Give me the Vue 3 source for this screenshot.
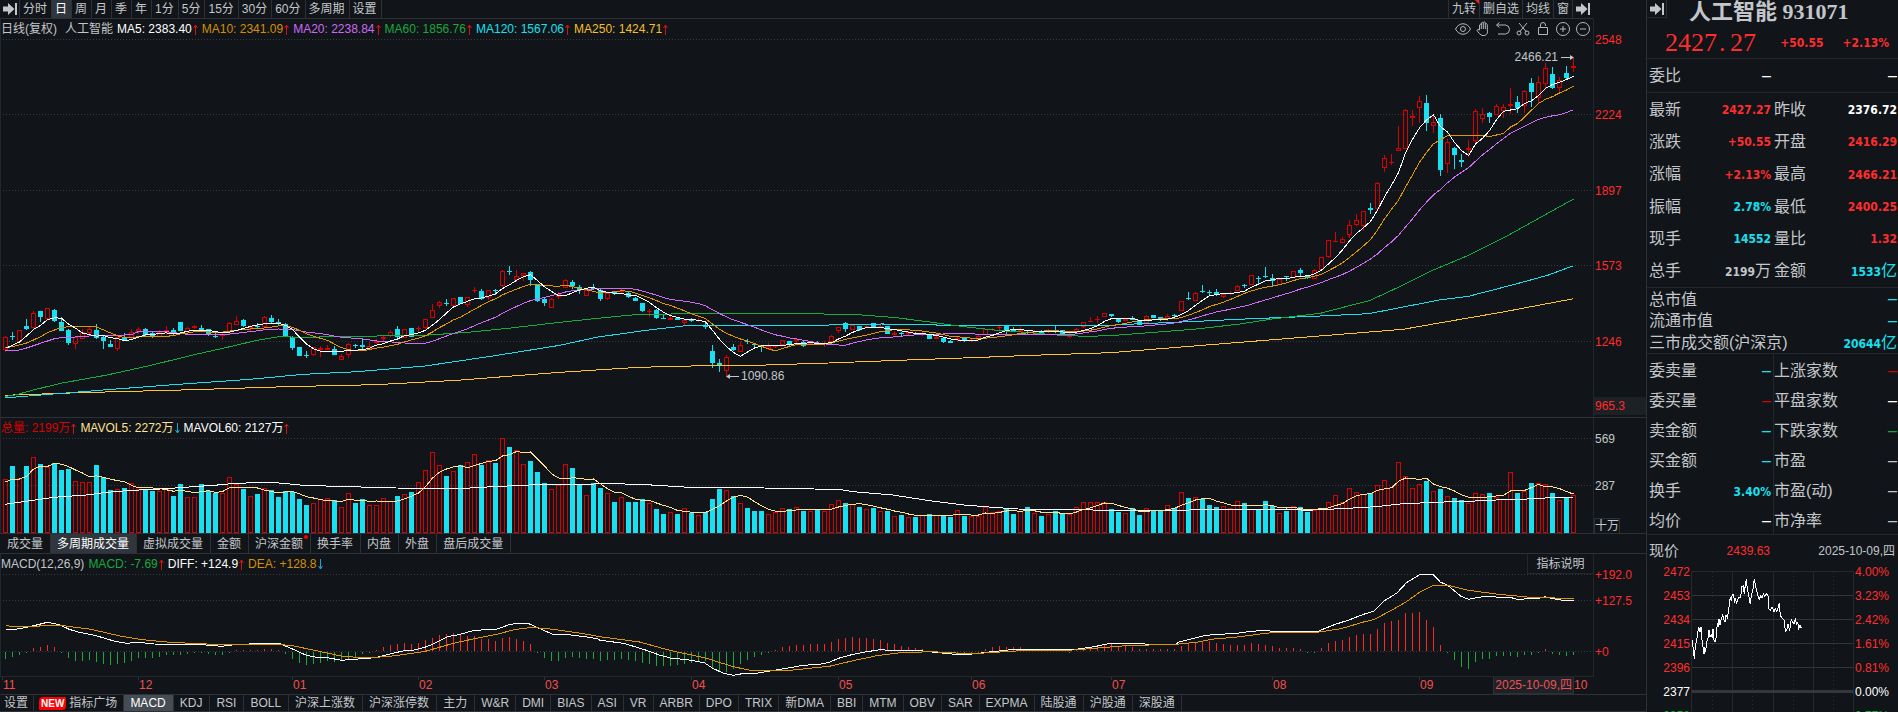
<script setup>
const CYAN = 'c'
const STEP = 7
const FIRST_X = 5.5
const PLOT_LEFT = 1
const PLOT_WIDTH = 1592

/* ---------- candles: direction + high, body top, body bottom, low ---------- */
const candleSegments = [
  {
    base: 240,
    rows: `r289,291,330,335 c276,288,291,300 r270,270,306,306 c237,257,268,270 r213,219,264,264 c213,213,232,245
    r204,204,237,237 c207,210,243,245 c232,246,273,273 c267,270,309,315 r290,290,312,327 r267,276,297,297
    r262,267,279,285 c252,270,294,297 c288,291,303,327 c300,312,321,321 r290,292,327,333 c279,293,300,303
    r268,276,293,296 r261,267,275,282 c264,267,285,290 c275,279,290,294 r270,276,290,290 r258,270,279,284
    c264,270,282,285 c246,246,273,273 r262,265,276,282 r255,258,264,268 c255,264,272,275 c267,267,284,288
    c280,288,291,294 r280,282,288,300 r246,249,276,282 r228,243,255,255 c237,240,258,261 r254,258,264,275
    c249,258,261,264 r228,231,260,264 c225,234,246,249 c238,246,252,256 c249,252,288,288 c288,292,324,330
    c321,321,348,348 c333,345,348,354 r321,321,345,348 r318,324,330,351 r315,324,330,330 c318,327,345,345
    r342,348,360,360 r309,312,345,354 c312,315,318,324 c297,315,321,330 r306,318,328,330 r297,304,309,312
    r285,291,297,303 r270,276,288,290 c258,267,291,294 r267,267,293,293 c264,264,291,291 r258,264,267,276
    r237,237,264,267 r192,210,234,234 r183,186,198,204 c177,189,192,198 r174,174,198,198 c171,171,192,192
    r171,171,195,201 r141,150,153,159 c147,153,177,180 r150,150,174,180 c147,150,153,165 r90,93,138,141
    c78,93,96,105 r90,108,120,125 r99,99,108,123 c93,96,120,138 c132,135,183,186 c174,177,189,198
    r174,177,204,204 r156,162,170,178 r118,120,143,145 c120,126,138,147 c135,142,150,162 r145,150,167,167
    c132,144,147,150 c148,150,177,183 r157,160,177,180 c153,157,162,165 r147,153,156,162 c155,160,171,174
    c171,174,183,183 c189,189,213,216 r207,213,216,231 c207,210,234,237 c222,234,237,237 r228,234,240,240
    c231,234,240,240 r238,241,249,258 c234,238,244,246 r234,240,243,246 c246,255,261,267 c315,333,369,384
    c357,369,375,396 r345,351,392,408 c312,321,330,333 r306,316,335,335 c297,304,307,312 c309,312,315,327
    c315,317,322,336 r309,318,328,330 r315,318,321,324 r300,300,315,318 c303,303,312,318 r294,297,303,310
    c303,306,318,321 r305,308,311,313 c303,308,311,314 r304,309,312,321 r285,289,306,306 r261,261,274,279
    c246,249,267,276 r256,256,270,270 c258,258,270,273 r256,258,261,264 c249,249,262,264 r249,257,260,264
    c258,258,282,282 r273,279,285,285 c276,279,282,288 r273,276,282,288 c276,280,283,285 r276,280,283,287
    c282,282,297,297 r288,291,297,297 c291,294,306,309 c300,303,308,309 r288,294,300,303 c292,294,303,306
    r294,300,303,306 r286,289,300,300 r267,267,284,286 r264,267,270,273 r255,262,264,270 c255,258,270,285
    c261,270,274,276 r261,270,276,276 c270,276,280,285 r270,273,280,282 c270,273,279,285 r267,270,276,278
    c256,270,273,278 c270,270,283,285 r280,284,290,294 r264,267,277,278 r246,247,262,264 r231,243,246,246
    r228,237,240,250 r219,220,231,231`
  },
  {
    base: 60,
    rows: `c762,762,768,771 c777,777,786,789 r777,777,782,782 c768,777,780,780 c780,780,795,795 r765,768,789,792
    c765,765,774,774 c771,771,780,783 r762,768,777,783 c762,766,769,771 r723,723,753,753 c696,714,717,720
    r696,699,723,723 c675,693,696,699 c690,696,699,705 c687,696,705,708 r699,702,711,714 r693,699,702,705
    r675,678,693,693 c672,675,678,684 r645,645,675,676 c648,654,657,672 c621,648,651,654 c642,654,663,678
    r656,658,675,676 c648,648,651,663 r633,633,654,654 c624,630,639,648 c645,645,654,657 r627,630,657,657
    r591,591,630,630 r541,541,591,593 r516,543,546,546 r531,537,549,549 r480,495,525,533 r462,480,495,497
    r453,453,497,513 c429,444,450,461 r366,369,447,447 r285,294,324,335 r282,306,309,315 r198,264,273,273
    r147,150,267,267 r150,168,174,197 r108,123,144,189 c105,129,189,213 r162,186,198,218 c162,174,330,348
    r237,246,312,338 c261,264,285,327 c282,299,305,320 r240,264,269,290 r147,153,243,252 r144,162,177,189
    c156,159,171,189 r132,138,165,165 r132,141,152,173 r84,132,137,161 c108,126,144,158 r90,93,137,158
    c54,69,96,141 r48,66,114,129 r9,24,72,83 c21,42,84,87 r51,60,84,96 c18,39,54,57 r-6,18,24,36`
  }
]

const candles = candleSegments
  .flatMap(({ base, rows }) =>
    rows.trim().split(/\s+/).map(row => {
      const [high, top, bottom, low] = row.slice(1).split(',').map(v => Math.round(v / 3) + base)
      return { kind: row[0], high, top, bottom, low }
    })
  )
  .map((c, i) => ({ ...c, x: FIRST_X + STEP * i, close: c.kind === CYAN ? c.bottom : c.top }))

let risingPath = ''
let fallingWicks = ''
let fallingBodies = ''
for (const { kind, x, high, top, bottom, low } of candles) {
  const wicks = (high < top ? `M${x} ${high}V${top}` : '') + (low > bottom ? `M${x} ${bottom}V${low}` : '')
  if (kind === CYAN) {
    fallingWicks += wicks
    fallingBodies += `M${x - 2.5} ${top}h5V${Math.max(bottom, top + 1)}h-5z`
  } else {
    const depth = bottom - top
    risingPath += wicks + (depth <= 1
      ? `M${x - 2.5} ${top + 0.5}h5`
      : `M${x - 2} ${top + 0.5}h4V${bottom - 0.5}h-4z`)
  }
}

/* ---------- line helpers ---------- */
const trace = (parts) => parts
  .flatMap(([scale, left, top, pts]) => pts.split(' ').map(p => {
    const [x, y] = p.split(',').map(Number)
    return `${(x / scale + left).toFixed(1)},${(y / 3 + top).toFixed(1)}`
  }))
  .join(' ')

/* `lead` holds the first values, for which there is no full span of history */
const average = (values, span, lead) => values
  .map((_, i) => {
    const y = i < lead.length
      ? lead[i] / 3 + 240
      : values.slice(Math.max(0, i - span + 1), i + 1).reduce((a, b) => a + b, 0) / Math.min(span, i + 1)
    return `${FIRST_X + STEP * i},${y.toFixed(1)}`
  })
  .join(' ')

const closes = candles.map(c => c.close + (c.kind === CYAN ? 0 : 0.5))
const A = 2.8
const B = 2.9037
const C = 2.529

const priceLines = [
  { name: 'ma250', points: trace([
    [A, 0, 240, '14,466 220,458 540,449 800,440 1050,434 1280,421 1568,397'],
    [A, 550, 240, '250,382 430,377 580,376 780,369 1000,360 1210,352 1350,346 1568,338'],
    [B, 1100, 60, '880,808 990,788 1170,756 1375,716']]) },
  { name: 'ma120', points: trace([
    [A, 0, 240, '14,473 45,471 150,462 300,449 500,433 700,418 850,403 1000,395 1190,378 1380,348 1568,316'],
    [A, 550, 240, '130,292 260,272 390,256 780,255 930,252 1040,253 1100,256 1568,256'],
    [B, 1100, 60, '100,792 260,785 440,776 620,769 780,761 870,743 990,719 1070,709 1200,674 1300,646 1375,617']]) },
  { name: 'ma60', points: trace([
    [A, 0, 240, '14,469 40,466 90,451 170,430 300,405 430,374 540,345 640,321 720,301 780,290 850,292 1000,289 1190,286 1310,277 1430,264 1568,247'],
    [A, 550, 240, '150,233 250,223 430,221 680,221 850,223 970,233 1063,246 1150,259 1250,271 1330,277 1430,286 1500,289 1568,287'],
    [B, 1100, 60, '270,808 400,793 500,777 640,760 785,721 870,680 968,630 1070,586 1180,529 1375,417']]) },
  { name: 'ma20', points: average(closes, 20, [332, 331, 330, 324, 317, 310, 303, 296, 293, 293, 291, 289, 288, 287, 286, 286, 285, 285, 284]) },
  { name: 'ma10', points: average(closes, 10, [323, 320, 315, 309, 300, 290, 278, 270, 262]) },
  { name: 'ma5', points: average(closes, 5, [325, 316, 306, 288]) }
]

/* ---------- volume ---------- */
const volumeSegments = [
  [410, `208 168 205 168 142 162 170 160 180 177 214 217 217 165 202 240 238 234 220 236 237 243 244 237 258 222 262 262 222 244
  249 250 202 222 237 259 252 235 240 262 243 247 267 285 280 268 265 270 292 250 279 267 286 286 265 274 258 253 246 217
  181 127 166 198 184 165 157 133 165 151 159 85 111 121 163 153 186 219 238 226`],
  [420, `132 144 195 225 190 204 219 246 231 246 246 237 249 267 282 276 282 264 279 285 276 237 207 210 228 249 264 273 273 282
  275 264 267 261 273 273 267 273 252 240 249 252 261 267 264 273 273 288 285 291 291 285 282 286 288 291 270 287 288 288
  261 276 273 267 282 273 261 279 288 282 273 281 283 261 246 246 246 246 268 276 279 264 285 265 270 272 256 264 216 234
  231 238 255 261 258 264 243 249 268 268 243 259 279 273 258 261 276 271 268 247 226 247 205 217 222 219 196 181 201 127
  169 205 193 183 214 207 229 234 240 249 219 223 219 231 237 157 219 214 189 190 193 219 241 234 226`]
]
const volumes = volumeSegments.flatMap(([base, list]) => list.trim().split(/\s+/).map(v => Math.round(v / 3) + base))
let risingBars = ''
let fallingBars = ''
volumes.forEach((top, i) => {
  const x = FIRST_X + STEP * i
  if (candles[i].kind === CYAN) fallingBars += `M${x - 2.5} ${top}h5V533h-5z`
  else risingBars += `M${x - 2} ${top + 0.5}h4V532.5h-4z`
})
const volumeFast = average(volumes, 5, [726, 717, 717, 709])
const volumeSlow = trace([
  [A, 0, 410, '14,283 74,274 150,262 240,255 300,247 370,241 450,237 540,230 600,226 660,220 760,217 850,226 940,229 1110,234 1200,235 1300,235 1400,229 1500,224'],
  [A, 550, 420, '0,193 110,193 150,190 270,194 390,202 600,204 740,207 815,209 850,215 960,225 1063,242 1160,255 1240,262 1310,267 1400,269 1520,270'],
  [B, 1100, 420, '110,271 240,271 300,268 550,268 600,271 700,266 800,260 870,252 970,247 1070,244 1150,240 1240,237 1310,233 1375,232']])

/* ---------- MACD ---------- */
const macdSegments = [
  [590, `206 201 195 189 174 171 165 171 189 204 212 213 210 216 222 225 222 219 213 204 204 204 201 195 195 195 192 187 189 192
  195 195 189 180 180 180 180 177 177 180 192 207 219 225 222 219 213 216 213 207 201 192 189 180 171 165 162 159 162 159
  150 144 135 132 129 132 138 138 147 147 153 144 141 147 153 162 189 204 213 213 204 201 204 207 207 213 210 210 207 210
  213 219 222 228 228 228 225 222 219 213 213 234 243 246 237 222 210 201 195 189 180 171 168 165 165 162 162 162 156 147
  144 141 144 144 147 150 159 162 168 171 174 177 183 187 189 189 189 189 189 187 177 171 168 171 171 171 177 180 180 180
  180 180 187 180 177 174 171 165 162 171 165 171 177 177 177 177 177 177 168 162 159 153 153`],
  [420, `669 672 675 675 675 669 672 675 678 684 684 684 687 697 697 684 669 663 660 651 645 642 642 627 609 603 600 579 579 576
  600 621 675 697 720 741 747 726 717 717 708 708 708 711 705 705 699 687 702 705 708 705`]
]
let macdUp = ''
let macdDown = ''
macdSegments
  .flatMap(([base, list]) => list.trim().split(/\s+/).map(v => Math.round(v / 3) + base))
  .forEach((end, i) => {
    const x = FIRST_X + STEP * i
    if (end < 651) macdUp += `M${x} 651V${end}`
    else if (end > 651) macdDown += `M${x} 652V${Math.max(end, 653)}`
  })

const diffLine = trace([
  [C, 0, 590, '14,118 40,118 75,110 120,97 150,104 175,118 200,127 240,136 290,154 320,160 350,157 390,162 450,163 500,163 560,169 600,163 660,161 705,160 730,172 775,196 800,202 828,203 864,211 905,207 950,203 1000,188 1023,182 1045,181 1076,171 1094,163 1135,139 1160,134 1200,121 1255,118 1288,104 1310,99 1335,100 1360,113 1400,134 1430,133 1480,140 1510,146'],
  [C, 600, 590, '0,151 60,160 115,180 150,195 178,204 225,210 264,218 284,234 312,250 337,256 360,251 400,249 450,239 515,226 560,222 580,217 603,205 640,193 675,185 709,179 730,181 800,181 840,186 890,192 940,192 985,186 1040,179 1180,178 1210,177 1250,170 1290,160 1350,160 1390,163 1455,163'],
  [B, 1100, 420, '230,666 257,659 300,648 335,643 390,641 440,634 480,631 500,634 630,635 680,614 725,599 765,583 795,574 826,542 862,519 890,488 928,464 968,464 988,486 1010,496 1048,529 1070,538 1110,530 1190,532 1212,538 1275,535 1293,530 1310,535 1345,541 1375,541']])
const deaLine = trace([
  [C, 0, 590, '14,107 30,109 100,108 160,107 230,118 300,137 360,149 430,157 540,163 700,163 740,167 800,182 870,200 940,203 1000,197 1076,184 1147,160 1200,146 1260,132 1300,119 1345,112 1400,118 1480,132'],
  [C, 600, 590, '0,140 100,156 180,182 264,203 337,230 380,241 480,241 580,229 640,212 700,197 760,188 840,185 900,189 970,189 1080,181 1200,180 1260,174 1330,167 1450,163'],
  [B, 1100, 420, '220,673 280,667 330,657 390,652 440,646 480,640 520,637 630,637 700,626 765,606 795,599 846,571 887,547 928,517 965,497 1010,496 1070,511 1150,522 1240,531 1375,536']])

/* ---------- intraday ---------- */
const intraday = trace([[3, 1500, 460, '577,540 583,596 586,560 590,540 596,500 600,515 603,502 606,540 612,583 614,565 617,572 620,545 623,540 627,511 630,530 634,524 638,535 639,508 642,540 645,547 648,535 652,490 655,500 657,478 660,494 664,476 668,466 672,480 675,486 678,466 682,472 686,450 691,412 694,422 697,402 700,402 704,428 707,415 709,432 713,418 718,412 722,412 725,380 730,378 733,402 736,375 739,358 742,385 745,400 751,432 755,400 758,395 763,358 768,385 774,408 778,418 782,408 786,414 790,402 794,410 800,400 806,412 806,445 811,452 816,440 822,455 826,446 830,454 834,445 838,430 841,465 846,475 852,480 854,500 857,514 861,508 864,492 869,512 874,478 878,486 882,492 886,478 890,492 893,488 896,505 900,494 903,505 905,502']])
const leftScale = ['2472', '2453', '2434', '2415', '2396', '2377', '2358']
const rightScale = ['4.00%', '3.23%', '2.42%', '1.61%', '0.81%', '0.00%', '0.77%']
const scaleTone = i => (i < 5 ? 'red' : i === 5 ? 'white' : 'green')

/* ---------- text content ---------- */
const periods = ['分时', '日', '周', '月', '季', '年', '1分', '5分', '15分', '30分', '60分', '多周期', '设置']
const tools = ['九转', '删自选', '均线', '窗']
const averages = [
  ['ma5', 'MA5: 2383.40'], ['ma10', 'MA10: 2341.09'], ['ma20', 'MA20: 2238.84'],
  ['ma60', 'MA60: 1856.76'], ['ma120', 'MA120: 1567.06'], ['ma250', 'MA250: 1424.71']
]
const volumeTabs = ['成交量', '多周期成交量', '虚拟成交量', '金额', '沪深金额', '换手率', '内盘', '外盘', '盘后成交量']
const indicatorTabs = ['MACD', 'KDJ', 'RSI', 'BOLL', '沪深上涨数', '沪深涨停数', '主力', 'W&R', 'DMI', 'BIAS', 'ASI', 'VR', 'ARBR', 'DPO', 'TRIX', '新DMA', 'BBI', 'MTM', 'OBV', 'SAR', 'EXPMA', '陆股通', '沪股通', '深股通']
const months = [['11', 2], ['12', 138], ['01', 292], ['02', 418], ['03', 544], ['04', 691], ['05', 838], ['06', 971], ['07', 1111], ['08', 1272], ['09', 1419], ['10', 1573]]
const priceTicks = [['2548', 40], ['2224', 115], ['1897', 191], ['1573', 266], ['1246', 342]]
const quotes = [
  ['最新', '2427.27', 'red', '昨收', '2376.72', 'white'],
  ['涨跌', '+50.55', 'red', '开盘', '2416.29', 'red'],
  ['涨幅', '+2.13%', 'red', '最高', '2466.21', 'red'],
  ['振幅', '2.78%', 'cyan', '最低', '2400.25', 'red'],
  ['现手', '14552', 'cyan', '量比', '1.32', 'red'],
  ['总手', '2199万', 'grey', '金额', '1533亿', 'cyan']
]
const totals = [['总市值', '–'], ['流通市值', '–'], ['三市成交额(沪深京)', '20644亿']]
const breadth = [
  ['委卖量', '–', 'cyan', '上涨家数', '–', 'deep'],
  ['委买量', '–', 'deep', '平盘家数', '–', 'white'],
  ['卖金额', '–', 'cyan', '下跌家数', '–', 'green'],
  ['买金额', '–', 'cyan', '市盈', '–', 'grey'],
  ['换手', '3.40%', 'cyan', '市盈(动)', '–', 'grey'],
  ['均价', '–', 'white', '市净率', '–', 'grey']
]
/* splits a value into its bold figure and its lighter unit or dash */
const parts = text => text.match(/^([^万亿–]*)([万亿–]?)$/).slice(1)
const across = x => ({ left: `${((x - PLOT_LEFT) / PLOT_WIDTH) * 100}%` })
</script>

<template>
  <div class="terminal">
    <main class="charts">
      <nav class="toolbar" aria-label="周期">
        <button class="jump" type="button" aria-label="展开">
          <svg width="14" height="14" viewBox="0 0 14 14"><path d="M0 4.500h5V1l6.500 6L5 13V9.500H0z" /><path d="M12 1h2v12h-2z" /></svg>
        </button>
        <button v-for="p in periods" :key="p" type="button" class="period" :class="{ active: p === '日' }">{{ p }}</button>
        <span class="spacer"></span>
        <button v-for="t in tools" :key="t" type="button" class="tool" :class="{ flagged: t === '九转' }">{{ t }}</button>
        <button class="jump right" type="button" aria-label="收起">
          <svg width="14" height="14" viewBox="0 0 14 14"><path d="M0 4.500h5V1l6.500 6L5 13V9.500H0z" /><path d="M12 1h2v12h-2z" /></svg>
        </button>
      </nav>

      <section class="panel price">
        <div class="plot">
          <header class="legend">
            <span>日线(复权)</span><span class="stock">人工智能</span>
            <span v-for="[tone, text] in averages" :key="tone" class="reading" :class="tone">{{ text }}<svg class="arrow" width="5" height="11" viewBox="0 0 5 11"><path d="M2.5 11V1M.5 4l2-3 2 3" /></svg></span>
            <span class="icons">
              <button type="button" aria-label="显示"><svg width="16" height="16" viewBox="0 0 16 16"><path d="M.5 8C4 1 12 1 15.500 8 12 15 4 15 .5 8z" /><circle cx="8" cy="8" r="2.500" /></svg></button>
              <button type="button" aria-label="拖动"><svg width="16" height="16" viewBox="0 0 16 16"><path d="M4.500 9V4q.8-1.500 1.800 0V2q1-1.500 2 0v-.5q1-1.300 2 0V3q1-1 2 .5V9q1 4-2.500 5.500H7Q4 13 2 9.500q0-1.700 2.500-.5M6.300 3.500V8M8.300 2v6M10.300 3v5" /></svg></button>
              <button type="button" aria-label="撤销"><svg width="16" height="16" viewBox="0 0 16 16"><path d="M2 4h8.500q4 .5 4 4.500t-4 4.500H3M4.500 1.500 1.500 4l3 2.500" /></svg></button>
              <button type="button" aria-label="剪切"><svg width="16" height="16" viewBox="0 0 16 16"><path d="M4 2l7.500 9M12 2 4.500 11" /><circle cx="4" cy="12" r="2" /><circle cx="12" cy="12" r="2" /></svg></button>
              <button type="button" aria-label="锁定"><svg width="16" height="16" viewBox="0 0 16 16"><path d="M3.500 6.500h9v7h-9zM5.500 6.500V4q0-2.500 2.500-2.500T10.500 4v1" /></svg></button>
              <button type="button" aria-label="放大"><svg width="16" height="16" viewBox="0 0 16 16"><circle cx="8" cy="8" r="6.500" /><path d="M5 8h6M8 5v6" /></svg></button>
              <button type="button" aria-label="缩小"><svg width="16" height="16" viewBox="0 0 16 16"><circle cx="8" cy="8" r="6.500" /><path d="M5 8h6" /></svg></button>
            </span>
          </header>
          <div class="canvas">
            <svg class="chart" viewBox="1 39 1592 378" preserveAspectRatio="none">
              <path class="grid" d="M3 39.500H1592M3 114.500H1592M3 190.500H1592M3 265.500H1592M3 341.500H1592" />
              <path class="rise" :d="risingPath" />
              <path class="fall-line" :d="fallingWicks" />
              <path class="fall" :d="fallingBodies" />
              <polyline v-for="l in priceLines" :key="l.name" :class="l.name" :points="l.points" />
            </svg>
            <span class="mark high">2466.21<svg width="13" height="7" viewBox="0 0 13 7"><path d="M0 3.500h12" /><path class="tip" d="M9 1l4 2.500-4 2.500z" /></svg></span>
            <span class="mark low" :style="across(726)"><svg width="13" height="7" viewBox="0 0 13 7"><path d="M1 3.500h12" /><path class="tip" d="M4 1 0 3.500l4 2.500z" /></svg>1090.86</span>
          </div>
        </div>
        <svg class="axis" viewBox="0 19 52 398" preserveAspectRatio="xMinYMin meet">
          <text v-for="[t, y] in priceTicks" :key="t" x="1" :y="y + 4">{{ t }}</text>
          <rect x="0" y="397" width="52" height="18" />
          <text x="1" y="410">965.3</text>
        </svg>
      </section>

      <section class="panel volume">
        <div class="plot">
          <header class="legend">
            <span class="reading deep">总量: 2199万<svg class="arrow" width="5" height="11" viewBox="0 0 5 11"><path d="M2.5 11V1M.5 4l2-3 2 3" /></svg></span>
            <span class="reading fast">MAVOL5: 2272万<svg class="arrow down" width="5" height="11" viewBox="0 0 5 11"><path d="M2.5 0v10M.5 7l2 3 2-3" /></svg></span>
            <span class="reading ma5">MAVOL60: 2127万<svg class="arrow" width="5" height="11" viewBox="0 0 5 11"><path d="M2.5 11V1M.5 4l2-3 2 3" /></svg></span>
          </header>
          <div class="canvas">
            <svg class="chart" viewBox="1 438 1592 95" preserveAspectRatio="none">
              <path class="grid" d="M3 438.500H1592M3 485.500H1592" />
              <path class="rise" :d="risingBars" />
              <path class="fall" :d="fallingBars" />
              <polyline class="ma5" :points="volumeSlow" />
              <polyline class="fast" :points="volumeFast" />
            </svg>
          </div>
        </div>
        <svg class="axis pale" viewBox="0 418 52 115" preserveAspectRatio="xMinYMin meet">
          <text x="1" y="443">569</text>
          <text x="1" y="490">287</text>
          <path d="M.5 533V518.500H25.500V533" />
          <text x="1" y="530">十万</text>
        </svg>
      </section>

      <nav class="volume-tabs" aria-label="成交量指标">
        <button v-for="t in volumeTabs" :key="t" type="button" :class="{ active: t === '多周期成交量', dotted: t === '沪深金额' }">{{ t }}</button>
      </nav>

      <section class="panel macd">
        <div class="plot">
          <header class="legend">
            <span>MACD(12,26,9)</span>
            <span class="reading ma60">MACD: -7.69<svg class="arrow" width="5" height="11" viewBox="0 0 5 11"><path d="M2.5 11V1M.5 4l2-3 2 3" /></svg></span>
            <span class="reading ma5">DIFF: +124.9<svg class="arrow" width="5" height="11" viewBox="0 0 5 11"><path d="M2.5 11V1M.5 4l2-3 2 3" /></svg></span>
            <span class="reading ma10">DEA: +128.8<svg class="arrow down" width="5" height="11" viewBox="0 0 5 11"><path d="M2.5 0v10M.5 7l2 3 2-3" /></svg></span>
            <button class="explain" type="button">指标说明</button>
          </header>
          <div class="canvas">
            <svg class="chart" viewBox="1 574 1592 102" preserveAspectRatio="none">
              <path class="grid" d="M3 574.500H1592M3 600.500H1592M3 651.500H1592" />
              <path class="up" :d="macdUp" />
              <path class="down" :d="macdDown" />
              <polyline class="ma5" :points="diffLine" />
              <polyline class="ma10" :points="deaLine" />
            </svg>
          </div>
        </div>
        <svg class="axis" viewBox="0 554 52 122" preserveAspectRatio="xMinYMin meet">
          <text x="1" y="579">+192.0</text>
          <text x="1" y="605">+127.5</text>
          <text x="1" y="656">+0</text>
        </svg>
      </section>

      <div class="dates">
        <div class="months">
          <span v-for="[m, x] in months" :key="m" class="month" :style="across(x)">{{ m }}</span>
          <span class="today">2025-10-09,四</span>
        </div>
      </div>

      <nav class="indicator-tabs" aria-label="指标">
        <button type="button" class="settings">设置</button>
        <button type="button"><em>NEW</em>指标广场</button>
        <button v-for="(t, i) in indicatorTabs" :key="t" type="button" :class="{ active: t === 'MACD', common: i < 7 }">{{ t }}</button>
      </nav>
    </main>

    <aside class="quote">
      <header class="title">
        <button class="jump" type="button" aria-label="收起报价">
          <svg width="14" height="14" viewBox="0 0 14 14"><path d="M0 4.500h5V1l6.500 6L5 13V9.500H0z" /><path d="M12 1h2v12h-2z" /></svg>
        </button>
        <h1>人工智能 931071</h1>
      </header>
      <div class="last red">
        <strong>2427<i>.</i>27</strong>
        <b>+50.55</b>
        <b>+2.13%</b>
      </div>
      <div class="row ratio"><span>委比</span><b class="white"><i>–</i></b><span></span><b class="white"><i>–</i></b></div>
      <div class="rows six">
        <div v-for="q in quotes" :key="q[0]" class="row">
          <span>{{ q[0] }}</span><b :class="q[2]">{{ parts(q[1])[0] }}<i>{{ parts(q[1])[1] }}</i></b>
          <span>{{ q[3] }}</span><b :class="q[5]">{{ parts(q[4])[0] }}<i>{{ parts(q[4])[1] }}</i></b>
        </div>
      </div>
      <div class="rows totals">
        <div v-for="t in totals" :key="t[0]" class="pair">
          <span>{{ t[0] }}</span><b class="cyan">{{ parts(t[1])[0] }}<i>{{ parts(t[1])[1] }}</i></b>
        </div>
      </div>
      <div class="rows breadth">
        <div v-for="q in breadth" :key="q[0]" class="row">
          <span>{{ q[0] }}</span><b :class="q[2]">{{ parts(q[1])[0] }}<i>{{ parts(q[1])[1] }}</i></b>
          <span>{{ q[3] }}</span><b :class="q[5]">{{ parts(q[4])[0] }}<i>{{ parts(q[4])[1] }}</i></b>
        </div>
      </div>
      <div class="now"><span class="now-label">现价</span><span class="red">2439.63</span><span class="day">2025-10-09,四</span></div>
      <div class="intraday">
        <div class="scale left"><span v-for="(s, i) in leftScale" :key="s" :class="scaleTone(i)">{{ s }}</span></div>
        <svg class="mini" viewBox="1691 568 163 144" preserveAspectRatio="none">
          <path class="frame" d="M1691.500 712V571.500H1853.500V712M1732.500 571V712M1773.500 571V712M1813.500 571V712" />
          <path class="dots" d="M1712.500 572V712M1752.500 572V712M1793.500 572V712M1833.500 572V712" />
          <path class="rule" d="M1692 595.500H1853M1692 619.500H1853M1692 643.500H1853M1692 667.500H1853" />
          <path class="zero" d="M1692 691.500H1853" />
          <polyline class="ma5" :points="intraday" />
        </svg>
        <div class="scale right"><span v-for="(s, i) in rightScale" :key="s" :class="scaleTone(i)">{{ s }}</span></div>
      </div>
    </aside>
  </div>
</template>

<style>
html,
body {
  background: #111519;
}
</style>

<style scoped>
.terminal {
  display: grid;
  grid-template-columns: minmax(0, 1fr) 252px;
  height: 100vh;
  overflow: hidden;
  background: #111519;
  color: #c3c6ca;
  font: 12px/16px "Liberation Sans", "Noto Sans CJK SC", sans-serif;
}
*,
*::before,
*::after {
  box-sizing: border-box;
}
button {
  margin: 0;
  padding: 0;
  border: 0;
  background: none;
  color: inherit;
  font: inherit;
  white-space: nowrap;
}
svg {
  display: block;
}
i {
  font-style: normal;
  font-weight: 400;
}

/* colours */
.red { color: #ff2d2d; }
.deep { color: #d80000; }
.cyan { color: #18e0f0; }
.white { color: #fff; }
.green { color: #14a83c; }
.grey { color: #c3c6ca; }
.ma5 { color: #fff; stroke: #fff; }
.ma10 { color: #d68f00; stroke: #e09600; }
.ma20 { color: #cf68f4; stroke: #cf6cf6; }
.ma60 { color: #18a83e; stroke: #14ac3c; }
.ma120 { color: #18e0f0; stroke: #18e0f0; }
.ma250 { color: #f6bf2a; stroke: #ffc32b; }
.fast { color: #ffe293; stroke: #ffdf94; }

/* main column */
.charts {
  display: flex;
  flex-direction: column;
  min-width: 0;
}
.toolbar {
  display: flex;
  height: 19px;
  margin-right: 53px;
  border-bottom: 1px solid #2d3136;
}
.jump {
  display: flex;
  align-items: center;
  justify-content: center;
  width: 20px;
  height: 18px;
  border-right: 1px solid #2d3136;
  fill: #c3c6ca;
}
.jump.right {
  border: 0;
}
.period,
.tool {
  padding: 0 4px;
  border-right: 1px solid #2d3136;
}
.period {
  padding-left: 3px;
}
.tool {
  position: relative;
  padding: 0 3px;
}
.flagged {
  border-left: 1px solid #2d3136;
}
.flagged::after {
  content: "";
  position: absolute;
  top: 0;
  right: 0;
  border-top: 4px solid #ff1a1a;
  border-left: 4px solid transparent;
}
.active {
  background: #30363d;
  color: #fff;
}
.spacer {
  flex: 1;
}

.panel {
  display: grid;
  grid-template-columns: minmax(0, 1fr) 52px;
  border-bottom: 1px solid #2d3136;
}
.price {
  flex: 1;
  min-height: 0;
}
.volume {
  height: 116px;
}
.macd {
  height: 123px;
  border-bottom: 0;
}
.macd .plot {
  border-bottom: 1px solid #22272c;
}
.plot {
  display: flex;
  flex-direction: column;
  min-width: 0;
  min-height: 0;
  border-right: 1px solid #22272c;
  border-left: 1px solid #22272c;
}
.legend {
  display: flex;
  align-items: center;
  gap: 4px;
  height: 20px;
  white-space: nowrap;
}
.stock {
  margin-left: 4px;
}
.reading {
  display: inline-flex;
  align-items: center;
  gap: 1px;
  stroke: none;
}
.arrow {
  fill: none;
  stroke: #d81010;
}
.arrow.down {
  stroke: #14a6d8;
}
.icons {
  display: flex;
  gap: 4px;
  margin-left: auto;
  padding-right: 2px;
}
.icons svg {
  fill: none;
  stroke: #b4b8bc;
}
.explain {
  align-self: stretch;
  width: 66px;
  margin-left: auto;
  border-bottom: 1px solid #22272c;
  border-left: 1px solid #22272c;
}
.canvas {
  position: relative;
  flex: 1;
  min-height: 0;
}
.chart {
  width: 100%;
  height: 100%;
  fill: none;
  shape-rendering: crispEdges;
}
.grid {
  stroke: #363b41;
  stroke-dasharray: 1 2;
}
.rise {
  stroke: #d80000;
}
.fall-line {
  stroke: #18e0f0;
}
.fall {
  fill: #18e0f0;
}
.up {
  stroke: #ff2626;
}
.down {
  stroke: #18a83e;
}
.mark {
  position: absolute;
  display: flex;
  align-items: center;
  gap: 3px;
}
.mark svg {
  stroke: #c3c6ca;
}
.tip {
  fill: #c3c6ca;
  stroke: none;
}
.high {
  top: 10px;
  right: 19px;
}
.low {
  top: 329px;
  gap: 2px;
}
.axis {
  width: 52px;
  height: 100%;
  fill: #ff2a2a;
}
.axis rect {
  fill: #1c2126;
}
.axis path {
  fill: none;
  stroke: #2d3136;
}
.pale {
  fill: #c3c6ca;
}

.volume-tabs {
  display: flex;
  height: 20px;
  padding-left: 1px;
  border-bottom: 1px solid #2d3136;
}
.volume-tabs button {
  position: relative;
  padding: 0 7px 0 6px;
  border-right: 1px solid #2d3136;
}
.dotted::after {
  content: "";
  position: absolute;
  top: 1px;
  right: 2px;
  width: 4px;
  height: 4px;
  border-radius: 2px;
  background: #f00;
}
.dates {
  height: 17px;
  padding: 0 53px 0 1px;
  color: #f2504f;
}
.months {
  position: relative;
  height: 17px;
}
.month {
  position: absolute;
  padding-left: 1px;
}
.month::before {
  content: "";
  position: absolute;
  top: 0;
  left: 0;
  width: 1px;
  height: 3px;
  background: #2d3136;
}
.today {
  position: absolute;
  right: 19px;
  padding: 0 1px;
  border: 1px solid #2d3136;
  border-top: 0;
  background: #1c2228;
}
.indicator-tabs {
  display: flex;
  height: 18px;
  border-top: 1px solid #2d3136;
  border-bottom: 1px solid #2d3136;
}
.indicator-tabs button {
  padding: 0 6px;
  border-right: 1px solid #2d3136;
}
.indicator-tabs .settings {
  margin-right: 1px;
  padding: 0 5px 0 4px;
}
.indicator-tabs .common {
  padding-right: 7px;
}
.indicator-tabs em {
  display: inline-block;
  margin: 0 3px 0 -2px;
  padding: 0 2px;
  border-radius: 4px 1px;
  background: #f00;
  color: #fff;
  font-style: normal;
  font-weight: 700;
  font-size: 10px;
  line-height: 13px;
}
.indicator-tabs .active {
  background: #454c54;
}

/* quote column */
.quote {
  display: flex;
  flex-direction: column;
  min-width: 0;
  overflow: hidden;
  border-left: 1px solid #2d3136;
  font-size: 16px;
}
.title {
  display: flex;
  height: 24px;
}
h1 {
  flex: 1;
  margin: 0;
  padding-left: 22px;
  font: 700 22px/24px "Liberation Serif", "Noto Sans CJK SC", serif;
  white-space: nowrap;
}
.title .jump {
  border-bottom: 1px solid #22272c;
}
.last {
  display: flex;
  align-items: center;
  height: 35px;
  padding: 4px 9px 0 18px;
  border-bottom: 1px solid #22272c;
}
.last strong {
  margin-right: auto;
  font: 400 26px/30px "Liberation Serif", serif;
}
.last strong i {
  display: inline-block;
  width: 13px;
  padding-left: 2px;
}
.last b {
  margin-left: 19px;
}
b {
  font: 700 12px/16px "DejaVu Sans Condensed", "Noto Sans CJK SC", sans-serif;
}
b i {
  font-family: "Liberation Sans", "Noto Sans CJK SC", sans-serif;
  font-size: 16px;
}
.row {
  display: grid;
  grid-template-columns: 64px 58px 72px 1fr;
  align-items: center;
  padding: 1px 1px 0 2px;
  white-space: nowrap;
}
.row span:nth-child(3) {
  padding-left: 3px;
}
.row b {
  text-align: right;
}
.ratio {
  height: 34px;
  border-bottom: 1px solid #22272c;
}
.rows {
  display: grid;
  grid-auto-rows: 1fr;
  border-bottom: 1px solid #22272c;
}
.six {
  height: 195px;
}
.totals {
  height: 66px;
}
.pair {
  display: flex;
  align-items: center;
  justify-content: space-between;
  padding: 2px 1px 0 2px;
}
.breadth {
  height: 181px;
  background: linear-gradient(#22272c, #22272c) 126px 0 / 1px 100% no-repeat;
}
.breadth .row {
  padding-top: 4px;
}
.now {
  display: grid;
  grid-template-columns: 1fr auto 125px;
  align-items: center;
  height: 33px;
  padding: 0 3px 2px 2px;
  font-size: 12px;
}
.now-label {
  font-size: 15px;
}
.day {
  text-align: right;
}
.intraday {
  display: grid;
  grid-template-columns: 44px minmax(0, 1fr) 44px;
  flex: 1;
  min-height: 0;
  font-size: 12px;
}
.scale {
  display: flex;
  flex-direction: column;
  margin-top: -8px;
  line-height: 24px;
}
.scale.left {
  padding-right: 1px;
  text-align: right;
}
.scale.right {
  padding-left: 1px;
}
.mini {
  width: 100%;
  height: 144px;
  fill: none;
  shape-rendering: crispEdges;
}
.frame {
  stroke: #24292e;
}
.dots {
  stroke: #2d3136;
  stroke-dasharray: 1 3;
}
.rule {
  stroke: #30353a;
}
.zero {
  stroke: #33373c;
  stroke-width: 3;
}
</style>
